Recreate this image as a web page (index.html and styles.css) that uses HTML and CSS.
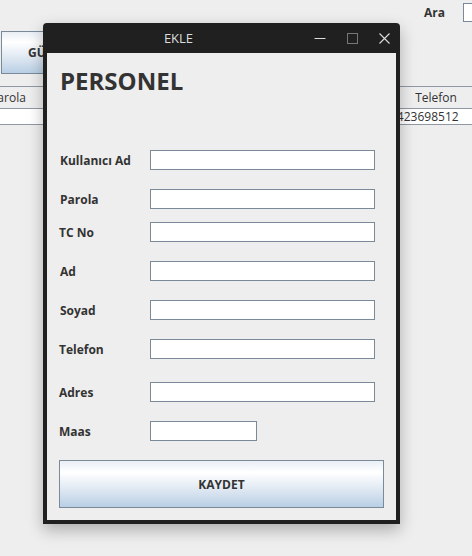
FILE: index.html
```html
<!DOCTYPE html>
<html lang="tr">

<head>
    <meta charset="UTF-8">
    <meta name="viewport" content="width=device-width, initial-scale=1.0">
    <title>Personel</title>
    <link rel="stylesheet" href="styles.css">
</head>

<body>
    <!-- Ana pencere (arkada) -->
    <div class="app">
        <div class="search-row">
            <span class="search-label">Ara</span>
            <input type="text" class="search-input">
        </div>
        <div class="toolbar">
            <button class="swing-btn top-btn">GÜNCELLE</button>
        </div>
        <div class="table">
            <div class="table-row table-head">
                <span class="cell">Parola</span>
                <span class="cell">TC No</span>
                <span class="cell">Ad</span>
                <span class="cell">Soyad</span>
                <span class="cell">Telefon</span>
            </div>
            <div class="table-row table-data">
                <span class="cell">1234</span>
                <span class="cell">11111111111</span>
                <span class="cell">Ali</span>
                <span class="cell">Yilmaz</span>
                <span class="cell">5423698512</span>
            </div>
        </div>
    </div>

    <!-- EKLE penceresi -->
    <div class="window">
        <div class="title-bar">
            <span class="title-text">EKLE</span>
            <span class="win-btn">
                <svg width="12" height="10" viewBox="0 0 12 10"><line x1="0.5" y1="5.5" x2="11.5" y2="5.5" stroke="#dcdcdc" stroke-width="1"/></svg>
            </span>
            <span class="win-btn">
                <svg width="11" height="11" viewBox="0 0 11 11"><rect x="0.5" y="0.5" width="10" height="10" fill="none" stroke="#767676" stroke-width="1"/></svg>
            </span>
            <span class="win-btn">
                <svg width="11" height="11" viewBox="0 0 11 11"><path d="M0.5 0.5 L10.5 10.5 M10.5 0.5 L0.5 10.5" stroke="#dcdcdc" stroke-width="1.1"/></svg>
            </span>
        </div>
        <div class="content">
            <h1 class="form-title">PERSONEL</h1>
            <div class="form">
                <div class="form-row first">
                    <label for="kullanici">Kullanıcı Ad</label>
                    <input type="text" id="kullanici">
                </div>
                <div class="form-row">
                    <label for="parola">Parola</label>
                    <input type="text" id="parola">
                </div>
                <div class="form-row tight">
                    <label for="tc" class="shift">TC No</label>
                    <input type="text" id="tc">
                </div>
                <div class="form-row">
                    <label for="ad">Ad</label>
                    <input type="text" id="ad">
                </div>
                <div class="form-row">
                    <label for="soyad">Soyad</label>
                    <input type="text" id="soyad">
                </div>
                <div class="form-row">
                    <label for="telefon" class="shift">Telefon</label>
                    <input type="text" id="telefon">
                </div>
                <div class="form-row wide">
                    <label for="adres" class="shift">Adres</label>
                    <input type="text" id="adres">
                </div>
                <div class="form-row">
                    <label for="maas" class="shift">Maas</label>
                    <input type="text" id="maas" class="short">
                </div>
            </div>
            <button class="swing-btn save-btn">KAYDET</button>
        </div>
    </div>
</body>

</html>
```

FILE: styles.css
```css
body {
    font-family: "Open Sans", "DejaVu Sans", sans-serif;
    background-color: #eeeeee;
    margin: 0;
    width: 472px;
    height: 556px;
    overflow: hidden;
    position: relative;
    color: #333333;
}

/* arkadaki ana pencere */
.search-row {
    display: flex;
    align-items: center;
    padding: 2px 0 0 424px;
    height: 21px;
}

.search-label {
    font-size: 12px;
    font-weight: bold;
    flex-shrink: 0;
}

.search-input {
    flex-shrink: 0;
    width: 60px;
    height: 19px;
    margin: 0 0 0 18px;
    border: 1px solid #7a8a99;
    box-sizing: border-box;
    background: white;
}

.toolbar {
    margin-top: 8px;
    padding-left: 1px;
}

.swing-btn {
    font-family: "Open Sans", "DejaVu Sans", sans-serif;
    font-weight: bold;
    font-size: 12px;
    color: #333333;
    border: 1px solid #7a8a99;
    background: linear-gradient(to bottom, #e9eff6 0%, #ffffff 25%, #dce6f1 65%, #b8cfe5 100%);
    box-sizing: border-box;
    cursor: pointer;
}

.top-btn {
    height: 43px;
    padding: 0 26px;
}

.table {
    margin-top: 12px;
    margin-left: -32px;
}

.table-row {
    display: grid;
    grid-template-columns: 80px 100px 80px 160px 96px;
    font-size: 12px;
}

.table-head {
    height: 21px;
    border-top: 1px solid #8f99a3;
    border-bottom: 1px solid #8f99a3;
    align-items: center;
}

.table-head .cell {
    text-align: center;
}

.table-data {
    height: 15px;
    line-height: 15px;
    background: white;
    border-bottom: 1px solid #8f99a3;
}

.table-data .cell {
    padding-left: 2px;
}

/* EKLE penceresi */
.window {
    position: absolute;
    left: 43px;
    top: 23px;
    width: 357px;
    box-sizing: border-box;
    background-color: #202020;
    padding: 0 4px 4px 4px;
    border-radius: 4px 4px 0 0;
    box-shadow: 0 6px 16px rgba(0, 0, 0, 0.28);
}

.title-bar {
    display: flex;
    align-items: center;
    height: 30px;
    margin: 0 -4px;
}

.title-text {
    flex: 1;
    text-align: center;
    padding-left: 10px;
    font-size: 13px;
    color: #dddddd;
}

.win-btn {
    width: 32px;
    height: 30px;
    display: flex;
    align-items: center;
    justify-content: center;
}

.content {
    background-color: #eeeeee;
    height: 467px;
    box-sizing: border-box;
    padding: 12px 12px 0 13px;
}

.form-title {
    margin: 0;
    font-size: 24px;
    line-height: 32px;
    font-weight: bold;
    color: #333333;
}

.form {
    display: flex;
    flex-direction: column;
}

.form-row {
    display: flex;
    align-items: center;
    height: 20px;
    margin-top: 19px;
}

.form-row.first {
    margin-top: 53px;
}

.form-row.tight {
    margin-top: 13px;
}

.form-row.wide {
    margin-top: 23px;
}

.form-row label {
    width: 90px;
    font-size: 12px;
    font-weight: bold;
    color: #333333;
}

.form-row label.shift {
    margin-left: -1px;
    width: 91px;
}

.form-row input {
    width: 225px;
    height: 20px;
    margin: 0;
    padding: 0 3px;
    border: 1px solid #7a8a99;
    box-sizing: border-box;
    background: white;
}

.form-row input.short {
    width: 107px;
}

.save-btn {
    display: block;
    margin: 19px 0 0 -1px;
    width: 325px;
    height: 48px;
}
```
